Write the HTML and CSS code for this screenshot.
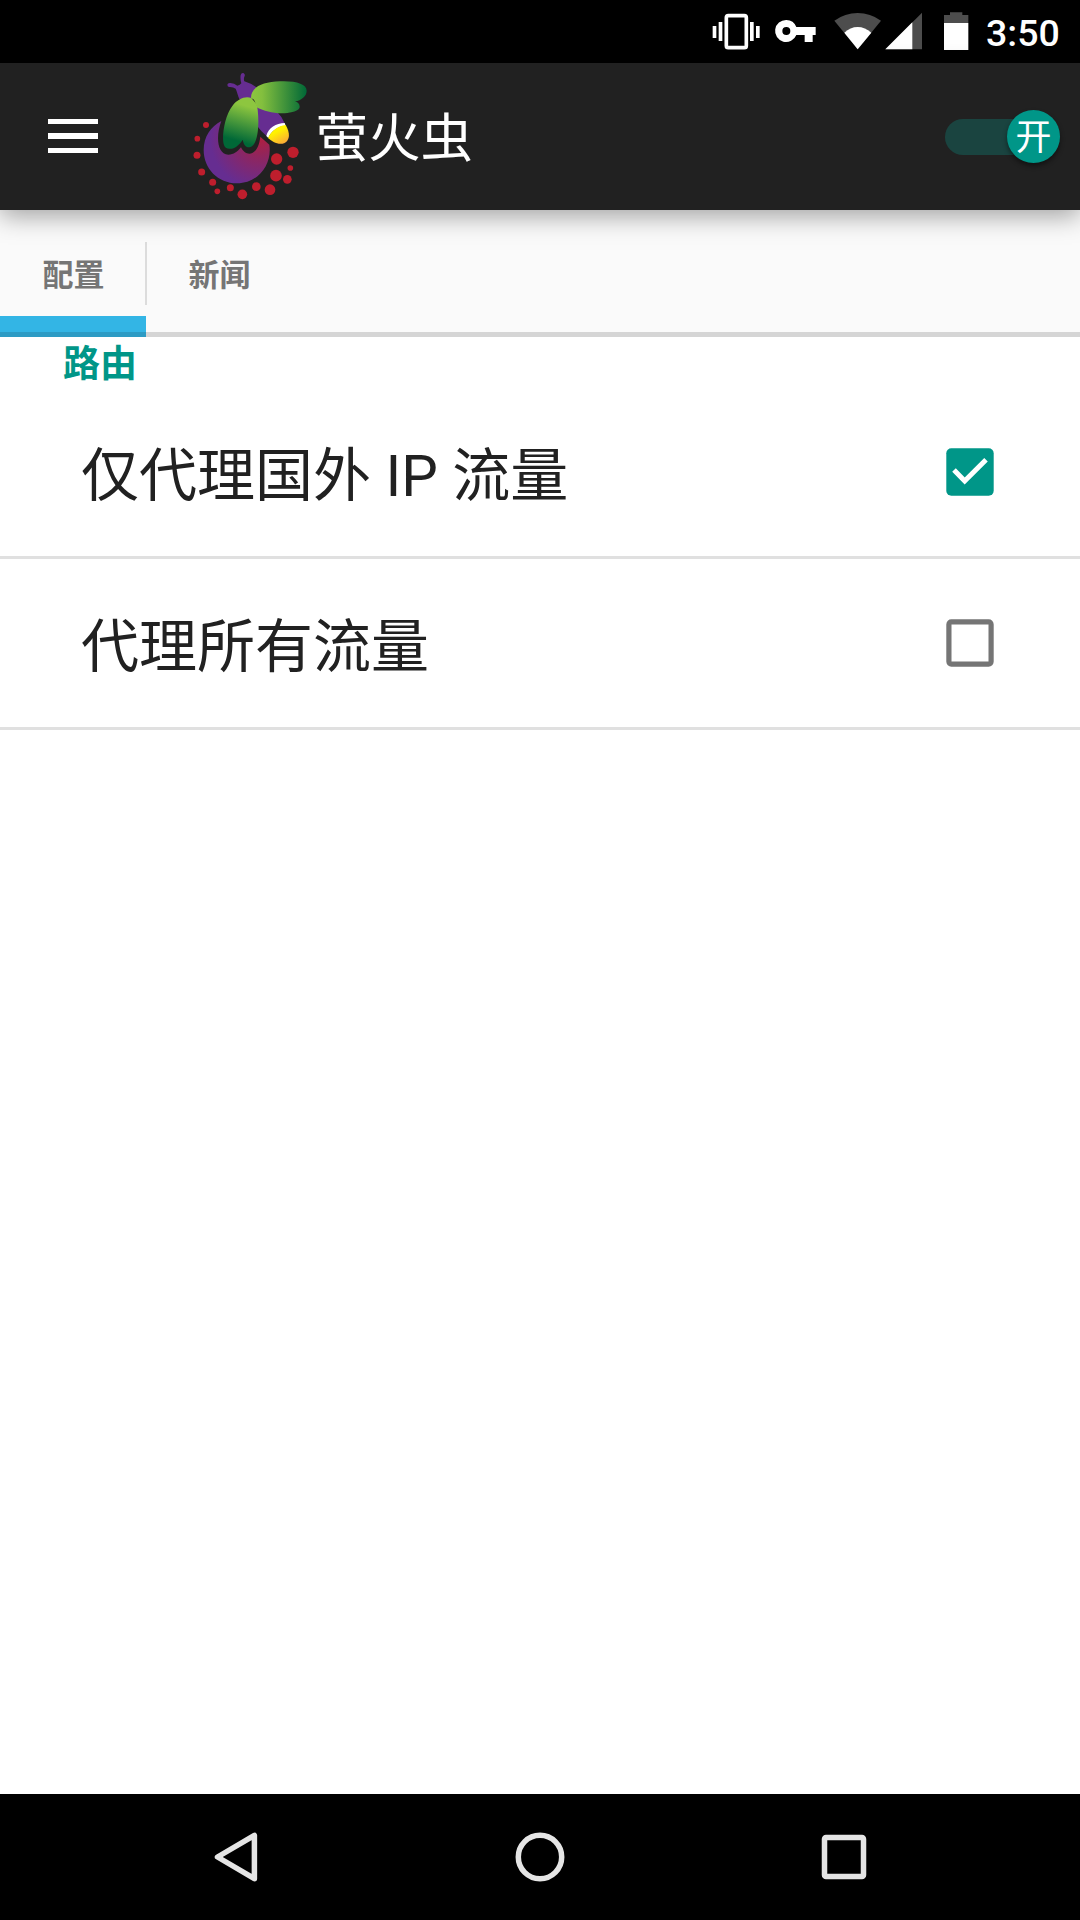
FILE: index.html
```html
<!DOCTYPE html>
<html lang="zh-CN">
<head>
<meta charset="utf-8">
<title>萤火虫</title>
<link rel="stylesheet" href="styles.css">
</head>
<body>
<div class="screen">
  <div class="status">
    <svg width="60" height="63" viewBox="16 0 180 189" fill="#fff"><rect x="77" y="47" width="60" height="96" rx="6" fill="none" stroke="#fff" stroke-width="11"/><path d="M36 78h11v36H36zM54 66h11v57H54zM148 66h11v57h-11zM166 78h11v36h-11z"/></svg>
    <svg width="54" height="63" viewBox="196 0 162 189" fill="#fff"><path fill-rule="evenodd" d="M257 60a33 33 0 1 0 30 45h25v21h24v-21h9V81h-58a33 33 0 0 0-30-21zm0 21a12 12 0 1 1 0 24a12 12 0 0 1 0-24z"/></svg>
    <svg width="64" height="63" viewBox="358 0 192 189"><path d="M471 148L401 62Q433 39 471 39T541 62z" fill="#4d4d4d"/><path d="M471 148L431 98Q449 81 471 81T512 98z" fill="#fff"/></svg>
    <svg width="44" height="63" viewBox="550 0 132 189"><path d="M554 148L664 38V148z" fill="#4d4d4d"/><path d="M554 148L635 67V148z" fill="#fff"/></svg>
    <svg width="48" height="63" viewBox="682 0 144 189"><path d="M730 69V45h18v-8h37v8h18v24z" fill="#4d4d4d"/><path d="M730 69h73v81h-73z" fill="#fff"/></svg>
    <span class="clock">3:50</span>
  </div>
  <header class="appbar">
    <div class="menu"><i></i><i></i><i></i></div>
    <svg class="logo" width="140" height="147" viewBox="0 9 420 441">
      <defs>
        <linearGradient id="wingA" x1="0" x2="1" y1="0" y2="0"><stop offset="0" stop-color="#8dc63f"/><stop offset=".2" stop-color="#83bf3e"/><stop offset="1" stop-color="#006837"/></linearGradient>
        <linearGradient id="wingB" x1=".6" x2=".4" y1="0" y2="1"><stop offset=".15" stop-color="#8dc63f"/><stop offset=".85" stop-color="#006837"/></linearGradient>
        <radialGradient id="body" gradientUnits="userSpaceOnUse" cx="240" cy="235" r="150"><stop offset="0" stop-color="#b01f3f"/><stop offset=".35" stop-color="#91255c"/><stop offset="1" stop-color="#662d91"/></radialGradient>
        <linearGradient id="tail" x1=".3" y1=".2" x2=".8" y2="1"><stop offset=".2" stop-color="#fff200"/><stop offset="1" stop-color="#fba43b"/></linearGradient>
      </defs>
      <path d="M124 183C108 225 109 282 145 284C161 284 173 275 183 262C197 292 234 291 241 230L268 254C277 310 237 370 171 370C114 370 71 326 71 270C71 230 93 199 124 183z" fill="url(#body)"/>
      <path d="M178 117C173 106 171 94 167 86Q159 80 147 81Q142 79 142 74Q143 68 151 69Q163 70 172 77Q180 76 184 70Q180 57 182 45Q184 38 190 39Q196 42 194 48Q190 56 193 64Q213 70 232 84L218 116z" fill="#662d91"/>
      <path d="M230 138L292 157Q306 170 314 190Q276 199 261 229Q240 211 232 198z" fill="#662d91"/>
      <path d="M259 228C265 203 288 190 314 189L317 197C292 200 274 213 265 234z" fill="#fff"/>
      <path d="M317 195C331 219 330 240 314 249C296 257 276 245 264 234C275 211 294 198 317 195z" fill="url(#tail)"/>
      <path d="M213 113C213 81 248 66 300 64C347 62 380 72 380 92C380 109 364 121 345 124C354 127 360 133 359 142C357 151 345 156 322 159C282 162 254 153 232 143L222 119z" fill="url(#wingA)"/>
      <path d="M214 114C195 108 174 116 157 138C134 167 125 229 131 252C136 275 169 271 188 239C192 258 200 263 209 262C232 258 239 202 233 149L230 133z" fill="url(#wingB)"/>
      <g fill="#be1e2d"><circle cx="78" cy="195" r="9"/><circle cx="52" cy="236" r="8.5"/><circle cx="51" cy="286" r="10.5"/><circle cx="65" cy="336" r="10.5"/><circle cx="98" cy="367" r="10.5"/><circle cx="112" cy="394" r="8.5"/><circle cx="151" cy="383" r="10.5"/><circle cx="187" cy="403" r="14.5"/><circle cx="229" cy="380" r="13"/><circle cx="270" cy="389" r="16"/><circle cx="288" cy="347" r="17.5"/><circle cx="322" cy="358" r="13"/><circle cx="331" cy="324" r="8.5"/><circle cx="290" cy="297" r="17"/><circle cx="339" cy="277" r="17"/></g>
    </svg>
    <h1 class="title">萤火虫</h1>
    <div class="switch"><span class="thumb">开</span></div>
  </header>
  <nav class="tabs">
    <div class="tab active">配置</div>
    <div class="tab">新闻</div>
  </nav>
  <main class="content">
    <h2 class="category">路由</h2>
    <div class="row"><span>仅代理国外 IP 流量</span>
      <svg class="check" width="48" height="48" viewBox="0 0 48 48"><rect x=".3" y=".3" width="47.4" height="47.4" rx="5" fill="#009688"/><path d="M8 22L18.7 33L40 11.8" fill="none" stroke="#fff" stroke-width="5"/></svg>
    </div>
    <div class="row"><span>代理所有流量</span>
      <svg class="check" width="48" height="48" viewBox="0 0 48 48"><rect x="2.9" y="2.9" width="42.2" height="42.2" rx="2.5" fill="none" stroke="#757575" stroke-width="5.2"/></svg>
    </div>
  </main>
  <footer class="navbar">
    <svg width="60" height="60" viewBox="0 0 60 60"><path d="M48.400 8.300V51.700L11.500 30z"/></svg>
    <svg width="60" height="60" viewBox="0 0 60 60"><circle cx="30" cy="30" r="21.700"/></svg>
    <svg width="60" height="60" viewBox="0 0 60 60"><rect x="10.500" y="10.500" width="39" height="39" rx="1.500"/></svg>
  </footer>
</div>
</body>
</html>
```
FILE: styles.css
```css
* { box-sizing: border-box; }
body { margin: 0; font-family: Roboto, "Noto Sans CJK SC", sans-serif; }
.screen { width: 1080px; height: 1920px; display: flex; flex-direction: column; background: #fff; overflow: hidden; }
.status { height: 63px; background: #000; display: flex; padding-left: 705.500px; flex: none; }
.status svg { flex: none; }
.clock { color: #fff; font-size: 37.500px; font-weight: 500; line-height: 67px; margin-left: 10.500px; }
.appbar { height: 147px; flex: none; background: #212121; display: flex; align-items: center; padding: 0 20px 0 48px; position: relative; box-shadow: 0 6px 24px rgba(0, 0, 0, .36); }
.menu { width: 50px; display: flex; flex-direction: column; gap: 9px; margin-top: -1px; }
.menu i { height: 5.500px; background: #fff; }
.logo { margin-left: 82px; flex: none; }
.title { margin: 4px 0 0 -4.500px; color: #fff; font-size: 52.500px; font-weight: 400; line-height: 72px; }
.switch { margin-left: auto; width: 115.500px; height: 36px; border-radius: 18px; background: #1a4440; display: flex; align-items: center; justify-content: flex-end; }
.thumb { width: 53px; height: 53px; border-radius: 50%; background: #009688; color: #fff; font-size: 36px; line-height: 53px; padding-top: 2px; text-align: center; box-shadow: 0 3px 5px rgba(0, 0, 0, .45); }
.tabs { height: 127px; flex: none; display: flex; background: #fafafa; border-bottom: 5px solid #d5d5d5; }
.tab { width: 146px; height: 127px; padding-left: 1px; font-size: 31px; font-weight: 700; color: #757575; text-align: center; line-height: 131px; }
.tab.active { background: linear-gradient(#dcdcdc, #dcdcdc) right 32px / 1px 63px no-repeat, linear-gradient(#33b5e5 16px, #2d9bc4 16px) 0 106px / 100% 21px no-repeat; }
.tab + .tab { box-shadow: none; background: linear-gradient(#dcdcdc, #dcdcdc) left 32px / 1px 63px no-repeat; }
.content { flex: 1; }
.category { margin: 0; height: 51px; padding-left: 63px; font-size: 37px; line-height: 55px; font-weight: 700; color: #009688; }
.row { height: 171px; padding: 0 86px 0 81px; display: flex; align-items: center; justify-content: space-between; border-bottom: 3px solid #e0e0e0; font-size: 58px; color: #212121; }
.row span { margin-top: -3px; }
.navbar { height: 126px; flex: none; background: #000; display: flex; align-items: center; justify-content: space-between; padding: 0 206px; }
.navbar svg { fill: none; stroke: #e5e5e5; stroke-width: 5.500px; stroke-linejoin: round; }
```
